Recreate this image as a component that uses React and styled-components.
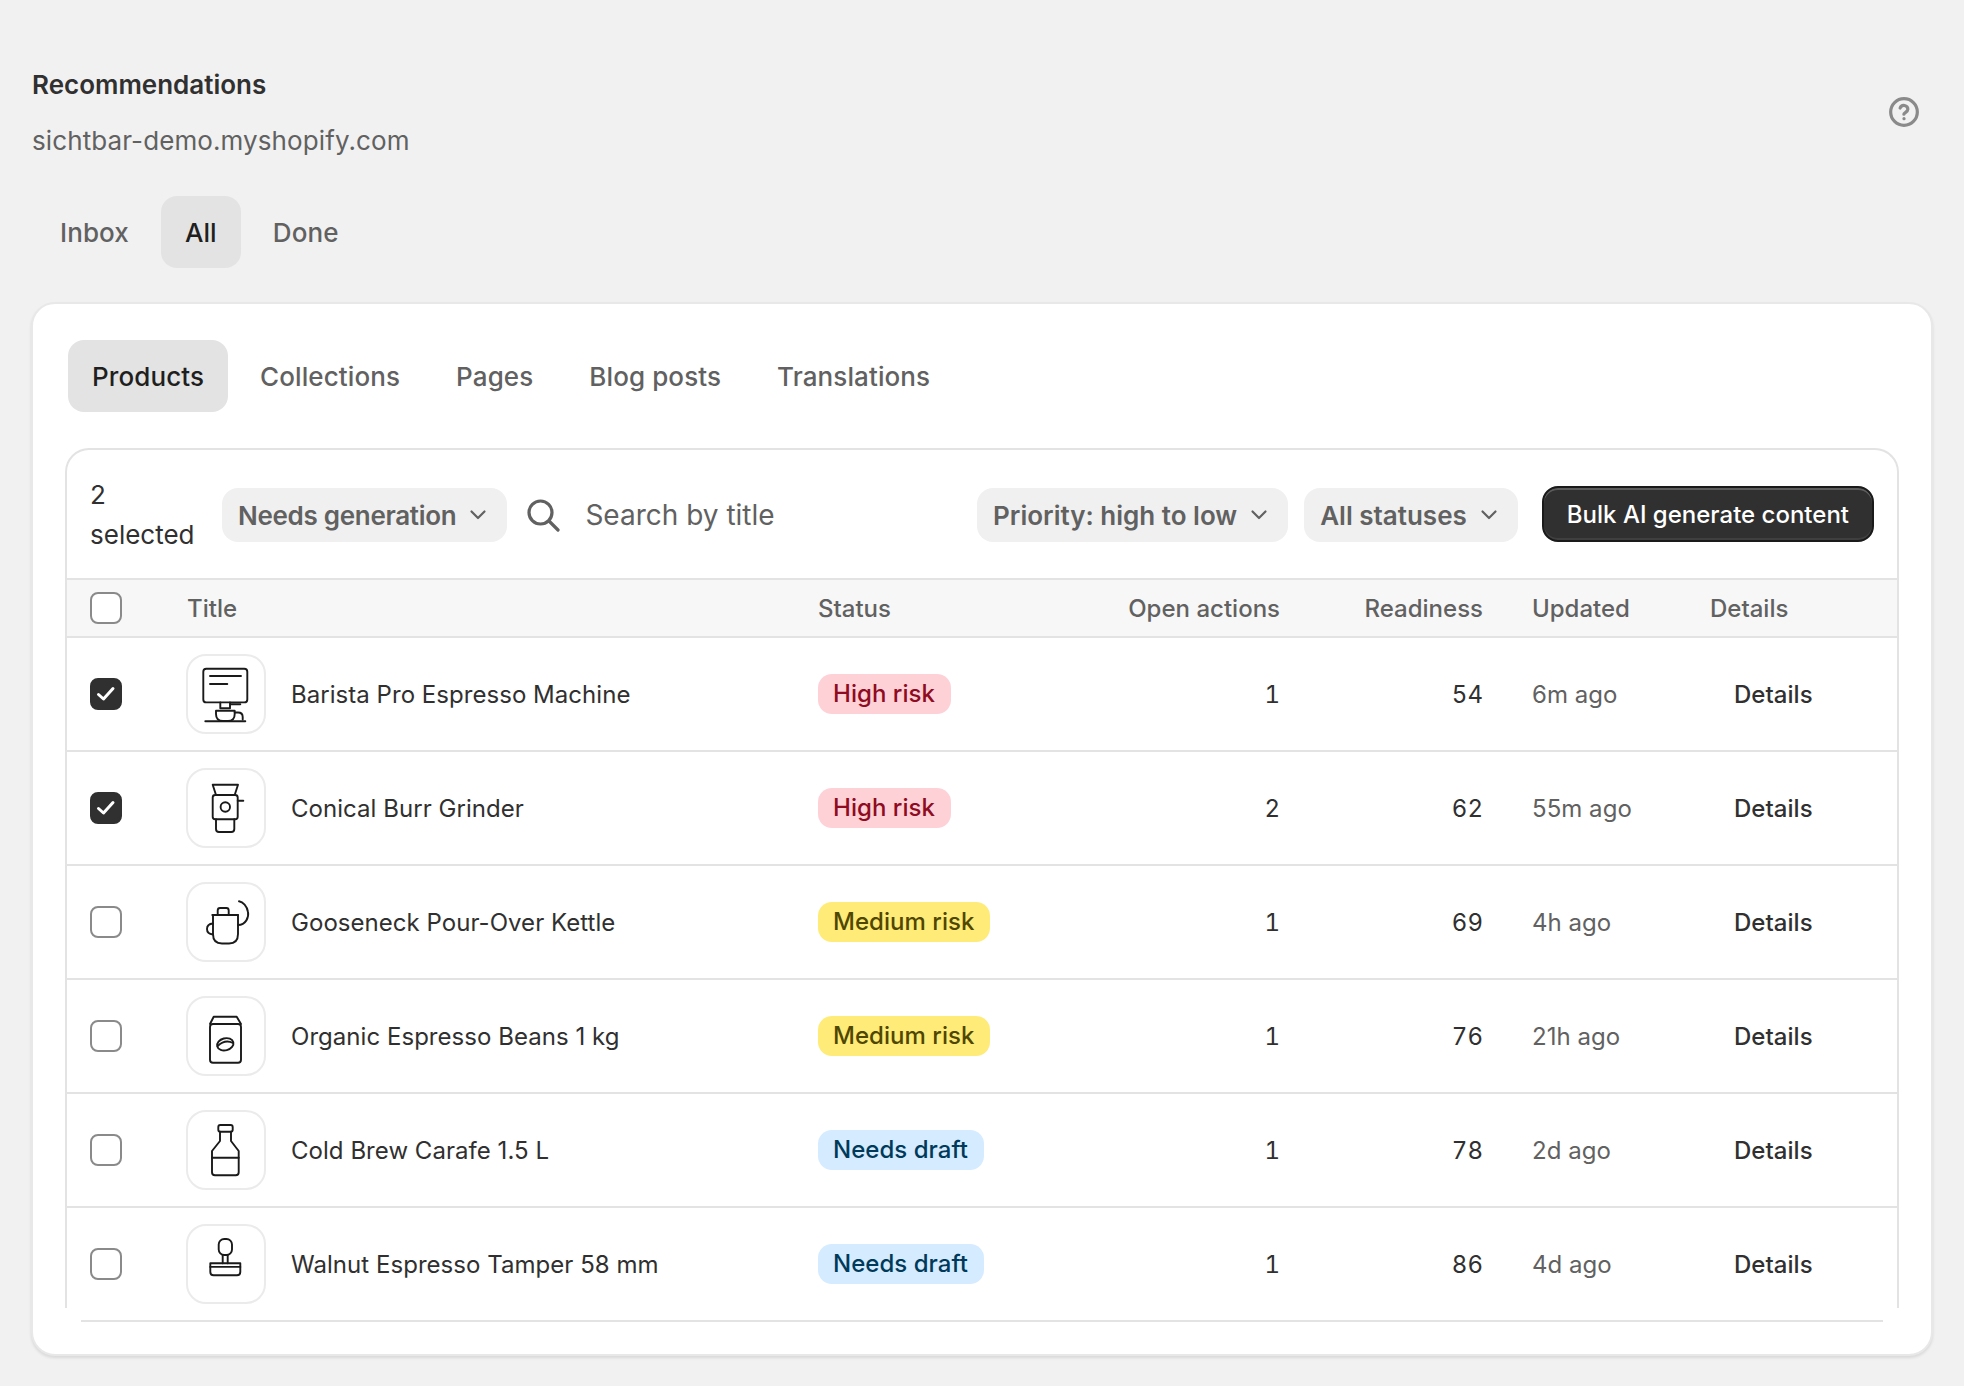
import React from "react";
import styled, { createGlobalStyle } from "styled-components";

const Global = createGlobalStyle`
  html, body { margin: 0; padding: 0; background: #f1f1f1; }
  body { font-family: Inter, "Noto Sans", sans-serif; color: #303030; -webkit-font-smoothing: antialiased; }
  * { box-sizing: border-box; }
`;

const Page = styled.div`
  padding: 65px 31px 32px 31px;
  min-height: 1386px;
  display: flex;
  flex-direction: column;
`;
const Header = styled.header`
  display: flex;
  justify-content: space-between;
  align-items: center;
`;
const Heading = styled.div`
  display: flex;
  flex-direction: column;
  gap: 16px;
  padding-left: 1px;
`;
const Title = styled.h1`
  margin: 0;
  font-size: 26px;
  line-height: 40px;
  font-weight: 590;
  color: #303030;
`;
const Shop = styled.div`
  font-size: 26px;
  line-height: 40px;
  letter-spacing: 0.1px;
  color: #616161;
`;
const Help = styled.svg`
  width: 32px;
  height: 32px;
  margin: -2px 13px 0 0;
  color: #8a8a8a;
`;
const Tabs = styled.nav`
  display: flex;
  gap: 8px;
  margin: ${(p) => p.$margin || "0"};
`;
const Tab = styled.button`
  height: 72px;
  padding: 0 24px;
  border: 0;
  border-radius: 16px;
  letter-spacing: 0.1px;
  font: ${(p) => (p.$active ? 550 : 500)} 26px Inter, sans-serif;
  background: ${(p) => (p.$active ? "#e3e3e3" : "transparent")};
  color: ${(p) => (p.$active ? "#1f1f1f" : "#616161")};
`;
const Card = styled.section`
  background: #fff;
  border: 2px solid #e8e8e8;
  border-radius: 24px;
  padding: 36px 32px 32px 35px;
  box-shadow: 0 2px 3px rgba(0, 0, 0, 0.1);
`;
const TableWrap = styled.div`
  position: relative;
  margin: 36px 0 0 -3px;
  border: 2px solid #e3e3e3;
  border-bottom: 0;
  border-radius: 24px 24px 0 0;
  &::before, &::after {
    content: "";
    position: absolute;
    bottom: 0;
    width: 16px;
    height: 14px;
    background: #fff;
  }
  &::before { left: -2px; }
  &::after { right: -2px; }
`;
const Toolbar = styled.div`
  height: 130px;
  display: flex;
  align-items: center;
  padding: 2px 23px 0 23px;
  border-bottom: 2px solid #e3e3e3;
`;
const Selected = styled.div`
  width: 132px;
  padding-right: 24px;
  flex: none;
  font-size: 26px;
  line-height: 40px;
  color: #303030;
`;
const Select = styled.button`
  height: 54px;
  flex: none;
  display: inline-flex;
  align-items: center;
  gap: 12px;
  padding: 0 19px 0 16px;
  border: 0;
  border-radius: 16px;
  background: #f0f0f0;
  color: #616161;
  letter-spacing: ${(p) => (p.$tight ? "-0.3px" : "0")};
  font: 600 26px Inter, sans-serif;
`;
const SearchIcon = styled.svg`
  width: 34px;
  height: 34px;
  flex: none;
  margin-left: 19px;
  color: #616161;
`;
const SearchInput = styled.input`
  flex: 1;
  min-width: 0;
  margin-left: 23px;
  border: 0;
  outline: 0;
  background: transparent;
  font: 400 28px Inter, sans-serif;
  color: #616161;
  &::placeholder { color: #616161; opacity: 1; }
`;
const Actions = styled.div`
  display: flex;
  align-items: center;
  gap: 16px;
`;
const Primary = styled.button`
  height: 56px;
  margin-left: 8px;
  margin-top: -2px;
  padding: 0 23px;
  border: 2px solid #1a1a1a;
  border-radius: 16px;
  background: linear-gradient(#303030, #303030);
  box-shadow: inset 0 2px 0 #5c5c5c, inset 0 -2px 0 #3f3f3f;
  color: #fff;
  font: 550 24px Inter, sans-serif;
`;
const columns = "120px 631px 200px 262px 203px 227px 1fr";
const HeadRow = styled.div`
  display: grid;
  grid-template-columns: ${columns};
  align-items: center;
  height: 58px;
  background: #f7f7f7;
  border-bottom: 2px solid #e3e3e3;
  font-size: 24px;
  font-weight: 500;
  color: #616161;
`;
const Row = styled.div`
  display: grid;
  grid-template-columns: ${columns};
  align-items: center;
  height: 114px;
  border-bottom: 2px solid #e3e3e3;
  font-size: 24px;
  letter-spacing: 0.04px;
  color: #303030;
`;
const CheckCell = styled.div`
  padding-left: 23px;
  display: flex;
`;
const Box = styled.span`
  width: 32px;
  height: 32px;
  border-radius: 8px;
  display: flex;
  align-items: center;
  justify-content: center;
  background: ${(p) => (p.$checked ? "#303030" : "#fff")};
  border: 2px solid ${(p) => (p.$checked ? "#303030" : "#8a8a8a")};
`;
const TitleCell = styled.div`
  display: flex;
  align-items: center;
  gap: 25px;
  margin-left: -1px;
`;
const Thumb = styled.div`
  width: 80px;
  height: 80px;
  flex: none;
  border: 2px solid #ebebeb;
  border-radius: 20px;
  color: #1a1a1a;
  svg { display: block; width: 76px; height: 76px; }
`;
const tones = {
  high: ["#fed1d7", "#8e0b21"],
  medium: ["#ffeb78", "#4f4700"],
  draft: ["#d5ebff", "#003a5a"],
};
const Badge = styled.span`
  display: inline-block;
  padding: 0 16px 0 15px;
  line-height: 40px;
  border-radius: 14px;
  font-weight: 500;
  background: ${(p) => tones[p.$tone][0]};
  color: ${(p) => tones[p.$tone][1]};
`;
const Right = styled.div`
  text-align: right;
  font-variant-numeric: tabular-nums;
`;
const Updated = styled.div`
  padding-left: 49px;
  color: ${(p) => (p.$head ? "inherit" : "#616161")};
`;
const DetailsLink = styled.div`
  padding-left: 24px;
  font-weight: 550;
  color: #303030;
`;

const Chevron = () => (
  <svg width="20" height="20" viewBox="0 0 20 20" fill="none" stroke="currentColor" strokeWidth="2.2" strokeLinecap="round" strokeLinejoin="round">
    <path d="M3.5 6.5 10 13l6.5-6.5" />
  </svg>
);
const Check = () => (
  <svg width="22" height="22" viewBox="0 0 22 22" fill="none" stroke="#fff" strokeWidth="3" strokeLinecap="round" strokeLinejoin="round">
    <path d="M3.5 11.5 8.5 16 18 5.5" />
  </svg>
);
const Art = ({ children }) => (
  <svg viewBox="0 0 76 76" fill="none" stroke="currentColor" strokeWidth="1.9" strokeLinecap="round" strokeLinejoin="round">
    {children}
  </svg>
);
const Machine = () => (
  <Art>
    <rect x="15.3" y="12.7" width="44" height="33.7" rx="3" />
    <path d="M22 20H53M22 28H39.3M32.3 46.4V52.3H42V46.4M42 48.3H52.3" />
    <path d="M28 54.7H46.7V58Q46.7 65 40 65H35Q28 65 28 58Z" />
    <path d="M46.7 56.5H50Q54.7 56.5 54.7 61V63.5" />
    <path d="M17.3 65.3H57.3" />
  </Art>
);
const Grinder = () => (
  <Art>
    <path d="M24.7 14.7H50L46.7 25H28Z" />
    <rect x="24.7" y="25" width="25" height="24.3" rx="2.5" />
    <circle cx="37.3" cy="37" r="4.7" />
    <path d="M49.7 30.7H55.3" />
    <path d="M28 49.3V59Q28 62 31 62H43.3Q46.3 62 46.3 59V49.3" />
  </Art>
);
const Kettle = () => (
  <Art>
    <path d="M29.7 31V26.5Q29.7 24 32 24H38.5Q40.7 24 40.7 26.5V31" />
    <path d="M24.3 31H50" />
    <path d="M25 31V50Q25 59.5 34 59.5H41Q50 59.5 50 50V31" />
    <path d="M25 39.5Q19 40 19 45T25 50.5" />
    <path d="M50 41C58 41 61 33 60 28C59 22 55 18 51 17.3" />
  </Art>
);
const Beans = () => (
  <Art>
    <path d="M22 26L25.7 18.7H48.7L53 26" />
    <rect x="22" y="26" width="31" height="38.7" rx="3" />
    <ellipse cx="37.3" cy="46.3" rx="8.3" ry="6" transform="rotate(-15 37.3 46.3)" />
    <path d="M29.7 48Q37 41 45 45" />
  </Art>
);
const Bottle = () => (
  <Art>
    <rect x="30.3" y="13" width="14.4" height="6.7" rx="2" />
    <path d="M32 19.7V29L24 39V60.3Q24 63.3 27 63.3H47.7Q50.7 63.3 50.7 60.3V39L43 29V19.7" />
    <path d="M24 45.7H50.7" />
  </Art>
);
const Tamper = () => (
  <Art>
    <rect x="30.7" y="13" width="13.3" height="16" rx="5.5" />
    <path d="M34.7 29V37.3M39.7 29V37.3" />
    <path d="M22.3 37.3H52.3V46Q52.3 49.3 49 49.3H25.6Q22.3 49.3 22.3 46Z" />
    <path d="M22.3 40.9H52.3" />
  </Art>
);

const products = [
  { name: "Barista Pro Espresso Machine", art: <Machine />, tone: "high", label: "High risk", open: 1, ready: 54, updated: "6m ago", checked: true },
  { name: "Conical Burr Grinder", art: <Grinder />, tone: "high", label: "High risk", open: 2, ready: 62, updated: "55m ago", checked: true },
  { name: "Gooseneck Pour-Over Kettle", art: <Kettle />, tone: "medium", label: "Medium risk", open: 1, ready: 69, updated: "4h ago" },
  { name: "Organic Espresso Beans 1 kg", art: <Beans />, tone: "medium", label: "Medium risk", open: 1, ready: 76, updated: "21h ago" },
  { name: "Cold Brew Carafe 1.5 L", art: <Bottle />, tone: "draft", label: "Needs draft", open: 1, ready: 78, updated: "2d ago" },
  { name: "Walnut Espresso Tamper 58 mm", art: <Tamper />, tone: "draft", label: "Needs draft", open: 1, ready: 86, updated: "4d ago" },
];

export default function App() {
  return (
    <Page>
      <Global />
      <Header>
        <Heading>
          <Title>Recommendations</Title>
          <Shop>sichtbar-demo.myshopify.com</Shop>
        </Heading>
        <Help viewBox="0 0 24 24" fill="none" stroke="currentColor" strokeWidth="2.4" strokeLinecap="round" strokeLinejoin="round">
          <circle cx="12" cy="12" r="10" />
          <path d="M9.1 9a3 3 0 0 1 5.8 1c0 2-3 2.6-3 3.6" />
          <path d="M12 17h.01" />
        </Help>
      </Header>
      <Tabs $margin="35px 0 34px 5px">
        <Tab>Inbox</Tab>
        <Tab $active>All</Tab>
        <Tab>Done</Tab>
      </Tabs>
      <Card>
        <Tabs>
          <Tab $active>Products</Tab>
          <Tab>Collections</Tab>
          <Tab>Pages</Tab>
          <Tab>Blog posts</Tab>
          <Tab>Translations</Tab>
        </Tabs>
        <TableWrap>
          <Toolbar>
            <Selected>2 selected</Selected>
            <Select $tight>Needs generation <Chevron /></Select>
            <SearchIcon viewBox="0 0 34 34" fill="none" stroke="currentColor" strokeWidth="3.2" strokeLinecap="round">
              <circle cx="14.5" cy="14.5" r="11.5" />
              <path d="M23 23 32 32" />
            </SearchIcon>
            <SearchInput placeholder="Search by title" />
            <Actions>
              <Select>Priority: high to low <Chevron /></Select>
              <Select>All statuses <Chevron /></Select>
              <Primary>Bulk AI generate content</Primary>
            </Actions>
          </Toolbar>
          <HeadRow>
            <CheckCell><Box /></CheckCell>
            <div>Title</div>
            <div>Status</div>
            <Right>Open actions</Right>
            <Right>Readiness</Right>
            <Updated $head>Updated</Updated>
            <div>Details</div>
          </HeadRow>
          {products.map((p) => (
            <Row key={p.name}>
              <CheckCell><Box $checked={p.checked}>{p.checked && <Check />}</Box></CheckCell>
              <TitleCell>
                <Thumb>{p.art}</Thumb>
                <span>{p.name}</span>
              </TitleCell>
              <div><Badge $tone={p.tone}>{p.label}</Badge></div>
              <Right>{p.open}</Right>
              <Right>{p.ready}</Right>
              <Updated>{p.updated}</Updated>
              <DetailsLink>Details</DetailsLink>
            </Row>
          ))}
        </TableWrap>
      </Card>
    </Page>
  );
}
